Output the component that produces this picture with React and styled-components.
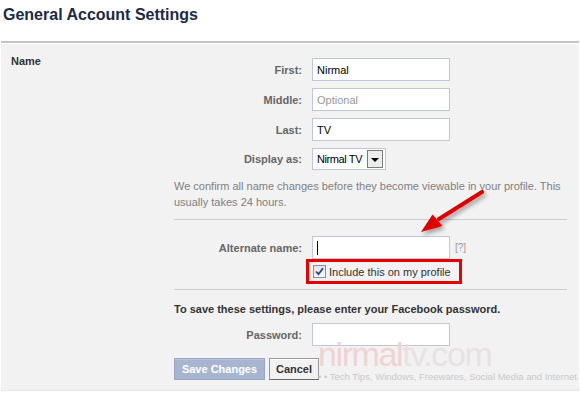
import React from 'react';
import styled, { createGlobalStyle } from 'styled-components';

const GlobalStyle = createGlobalStyle`
  body {
    margin: 0;
    background: #fff;
    font-family: "Liberation Sans", Arial, sans-serif;
  }
`;

const Page = styled.div`
  position: relative;
  width: 580px;
  height: 398px;
  overflow: hidden;
`;

const Title = styled.h1`
  margin: 0 0 16px;
  padding: 5px 0 0 3px;
  font-size: 16px;
  line-height: 20px;
  font-weight: bold;
  color: #1c2a47;
`;

const Panel = styled.div`
  display: grid;
  grid-template-columns: 173px 393px;
  margin: 0 1px;
  padding: 11px 0 10px;
  background: #f2f2f2;
  border-top: 2px solid #c4c4c4;
  border-bottom: 1px solid #e6e6e6;
  box-shadow: inset 0 1px 0 #fff;
`;

const SectionName = styled.div`
  padding-left: 10px;
  font-size: 11px;
  line-height: 14px;
  font-weight: bold;
  color: #333;
`;

const FormColumn = styled.div`
  display: flex;
  flex-direction: column;
  padding-top: 4px;
`;

const FieldGroup = styled.div`
  display: flex;
  flex-direction: column;
  gap: 7px;
`;

const FieldRow = styled.div`
  display: flex;
  align-items: center;
  margin-top: ${p => p.$top || 0}px;
`;

const Label = styled.div`
  width: 138px;
  box-sizing: border-box;
  padding-right: 10px;
  text-align: right;
  font-size: 11px;
  font-weight: bold;
  color: #666;
`;

const TextBox = styled.div`
  display: flex;
  align-items: center;
  width: 138px;
  height: 23px;
  box-sizing: border-box;
  padding-left: 4px;
  background: #fff;
  border: 1px solid #bdc7d8;
  font-size: 11px;
  color: ${p => (p.$placeholder ? '#999' : '#000')};
`;

const Caret = styled.span`
  width: 1px;
  height: 14px;
  background: #000;
`;

const SelectBox = styled.div`
  display: flex;
  align-items: center;
  justify-content: space-between;
  width: 74px;
  height: 22px;
  box-sizing: border-box;
  padding: 0 2px 0 4px;
  background: #fff;
  border: 1px solid #bdc7d8;
  font-size: 11px;
  letter-spacing: -0.4px;
  color: #000;
`;

const SelectButton = styled.div`
  display: flex;
  align-items: center;
  justify-content: center;
  width: 16px;
  height: 18px;
  box-sizing: border-box;
  background: #ececec;
  border: 1px solid #7a7a7a;
`;

const Triangle = styled.div`
  width: 0;
  height: 0;
  border-left: 4px solid transparent;
  border-right: 4px solid transparent;
  border-top: 4px solid #000;
  margin-top: 1px;
`;

const Note = styled.p`
  margin: 8px 0 9px;
  font-size: 11px;
  line-height: 16px;
  color: #808080;
`;

const Divider = styled.div`
  height: 1px;
  background: #cdcdcd;
`;

const Help = styled.span`
  margin-left: 5px;
  font-size: 10px;
  color: #999;
`;

const CheckRow = styled.div`
  display: flex;
  padding-left: 132px;
  margin-bottom: 5px;
`;

const Highlight = styled.label`
  display: flex;
  align-items: center;
  gap: 3px;
  width: 156px;
  height: 25px;
  box-sizing: border-box;
  padding-left: 4px;
  border: 3px solid #e60000;
  font-size: 11px;
  color: #333;
`;

const CheckBox = styled.span`
  display: flex;
  align-items: center;
  justify-content: center;
  width: 13px;
  height: 13px;
  box-sizing: border-box;
  border: 1px solid #8090a8;
  background: linear-gradient(#e4e4e4, #fafafa);
`;

const Heading = styled.div`
  margin-top: 11px;
  font-size: 11px;
  line-height: 16px;
  font-weight: bold;
  color: #333;
`;

const Buttons = styled.div`
  display: flex;
  gap: 4px;
  margin-top: 12px;
`;

const Button = styled.div`
  display: flex;
  align-items: center;
  justify-content: center;
  width: ${p => p.$w}px;
  height: 22px;
  box-sizing: border-box;
  font-size: 11px;
  font-weight: bold;
  color: ${p => (p.$primary ? '#fff' : '#333')};
  background: ${p => (p.$primary ? '#a8b5d1' : '#f2f2f2')};
  border: 1px solid ${p => (p.$primary ? '#98a7c6' : '#999')};
  border-bottom-color: ${p => (p.$primary ? '#98a7c6' : '#666')};
  box-shadow: inset 0 1px 0 ${p => (p.$primary ? '#b8c3da' : '#fff')};
`;

const Watermark = styled.div`
  position: absolute;
  left: 318px;
  top: 336px;
  pointer-events: none;
`;

const Brand = styled.div`
  font-size: 34px;
  line-height: 36px;
  letter-spacing: -1.4px;
  color: #e8e2e2;
`;

const BrandPink = styled.span`
  color: #efd2d2;
`;

const Tagline = styled.div`
  font-size: 9.5px;
  line-height: 10px;
  color: #c9c9c9;
  white-space: nowrap;
`;

const Arrow = styled.svg`
  position: absolute;
  left: 410px;
  top: 186px;
  filter: drop-shadow(2px 3px 2px rgba(0, 0, 0, 0.35));
`;

export default function App() {
  return (
    <Page>
      <GlobalStyle />
      <Title>General Account Settings</Title>
      <Panel>
        <SectionName>Name</SectionName>
        <FormColumn>
          <FieldGroup>
            <FieldRow>
              <Label>First:</Label>
              <TextBox>Nirmal</TextBox>
            </FieldRow>
            <FieldRow>
              <Label>Middle:</Label>
              <TextBox $placeholder>Optional</TextBox>
            </FieldRow>
            <FieldRow>
              <Label>Last:</Label>
              <TextBox>TV</TextBox>
            </FieldRow>
            <FieldRow>
              <Label>Display as:</Label>
              <SelectBox>
                Nirmal TV
                <SelectButton><Triangle /></SelectButton>
              </SelectBox>
            </FieldRow>
          </FieldGroup>
          <Note>
            We confirm all name changes before they become viewable in your profile. This
            usually takes 24 hours.
          </Note>
          <Divider />
          <FieldRow $top={16}>
            <Label>Alternate name:</Label>
            <TextBox><Caret /></TextBox>
            <Help>[?]</Help>
          </FieldRow>
          <CheckRow>
            <Highlight>
              <CheckBox>
                <svg width="9" height="9" viewBox="0 0 9 9">
                  <path d="M1 4.5 L3.5 7.2 L8 1.2" fill="none" stroke="#2a3f8f" strokeWidth="1.8" />
                </svg>
              </CheckBox>
              Include this on my profile
            </Highlight>
          </CheckRow>
          <Divider />
          <Heading>To save these settings, please enter your Facebook password.</Heading>
          <FieldRow $top={6}>
            <Label>Password:</Label>
            <TextBox />
          </FieldRow>
          <Buttons>
            <Button $primary $w={91}>Save Changes</Button>
            <Button $w={50}>Cancel</Button>
          </Buttons>
        </FormColumn>
      </Panel>
      <Watermark>
        <Brand><BrandPink>nirmal</BrandPink>tv.com</Brand>
        <Tagline>• • Tech Tips, Windows, Freewares, Social Media and Internet</Tagline>
      </Watermark>
      <Arrow width="80" height="56" viewBox="0 0 80 56">
        <path d="M72 6 L29 33" stroke="#e00000" strokeWidth="4" strokeLinecap="round" />
        <path d="M11 46 L22.5 28.5 L32.5 40 Z" fill="#e00000" />
      </Arrow>
    </Page>
  );
}
